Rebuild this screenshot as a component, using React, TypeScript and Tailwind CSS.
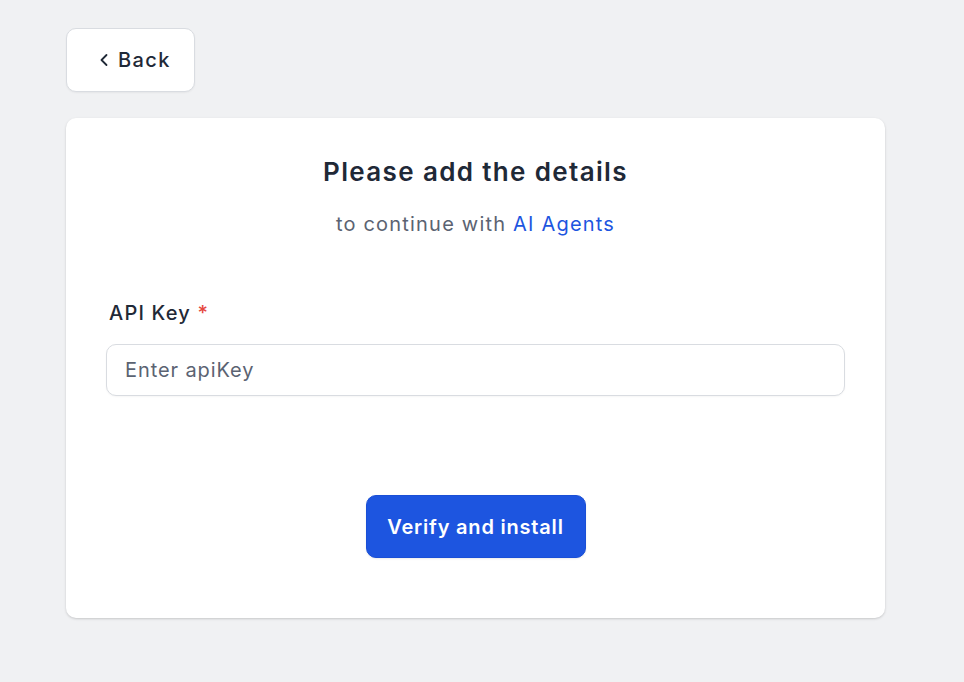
import { ChevronLeft } from "lucide-react";

export default function App() {
  return (
    <div
      className="min-h-[682px] w-full bg-[#f0f1f3] px-[66px] pt-[28px] tracking-[0.045em]"
      style={{ fontFamily: "Inter, 'Noto Sans', sans-serif" }}
    >
      <button className="flex h-[64px] w-[129px] items-center justify-center gap-[4px] rounded-[10px] border border-[#d9dce1] bg-white pl-[4px] text-[20px] font-medium tracking-[0.07em] text-[#1f2937] shadow-[0_1px_2px_rgba(0,0,0,0.05)]">
        <ChevronLeft size={20} strokeWidth={2.2} />
        Back
      </button>

      <div className="mt-[26px] w-[819px] rounded-[10px] bg-white px-[40px] pb-[60px] pt-[36px] shadow-[0_1px_3px_rgba(0,0,0,0.12),0_1px_2px_rgba(0,0,0,0.06)]">
        <h1 className="text-center text-[26px] font-semibold leading-[36px] tracking-[0.052em] text-[#1f2937]">
          Please add the details
        </h1>
        <p className="mt-[20px] text-center text-[20px] leading-[28px] tracking-[0.06em] text-[#5b6372]">
          to continue with <span className="text-[#1d55e0]">AI Agents</span>
        </p>

        <div className="mt-[61px]">
          <label className="block pl-[3px] text-[20px] font-medium leading-[28px] tracking-[0.06em] text-[#1f2937]">
            API Key <span className="text-[#e5483f]">*</span>
          </label>
          <input
            placeholder="Enter apiKey"
            className="mt-[17px] h-[52px] w-full rounded-[10px] border border-[#d9dce1] bg-white px-[18px] text-[20px] tracking-[0.045em] text-[#1f2937] outline-none placeholder:text-[#5b6372] shadow-[0_1px_2px_rgba(0,0,0,0.04)]"
          />
        </div>

        <div className="mt-[99px] flex justify-center">
          <button className="h-[63px] w-[220px] rounded-[10px] border border-[#1a4fd6] bg-[#1d55e0] text-[20px] font-semibold tracking-[0.04em] text-white shadow-[0_1px_2px_rgba(0,0,0,0.08)]">
            Verify and install
          </button>
        </div>
      </div>
    </div>
  );
}
